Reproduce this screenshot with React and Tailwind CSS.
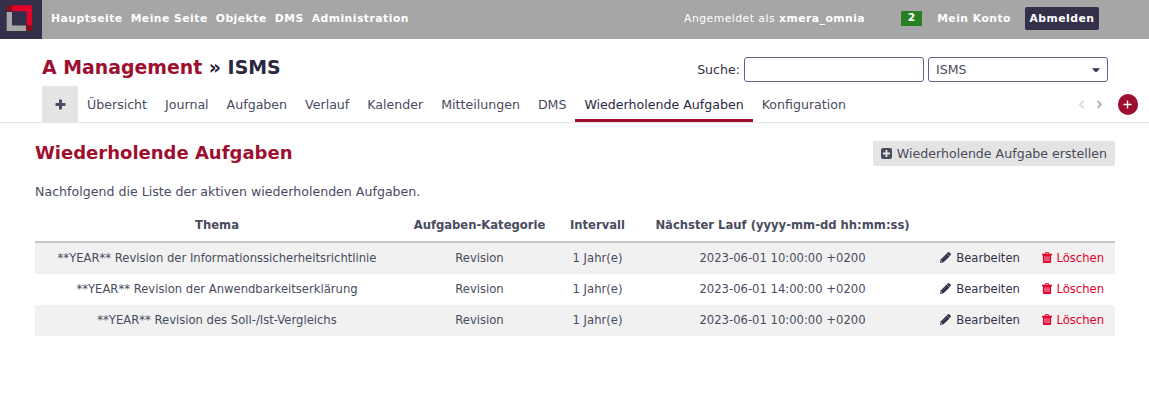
import React from "react";
import { FaAngleLeft, FaAngleRight } from "react-icons/fa";

const MENU = ["Hauptseite", "Meine Seite", "Objekte", "DMS", "Administration"];

const TABS = [
  "Übersicht",
  "Journal",
  "Aufgaben",
  "Verlauf",
  "Kalender",
  "Mitteilungen",
  "DMS",
  "Wiederholende Aufgaben",
  "Konfiguration",
];

const ROWS = [
  { topic: "**YEAR** Revision der Informationssicherheitsrichtlinie", next: "2023-06-01 10:00:00 +0200" },
  { topic: "**YEAR** Revision der Anwendbarkeitserklärung", next: "2023-06-01 14:00:00 +0200" },
  { topic: "**YEAR** Revision des Soll-/Ist-Vergleichs", next: "2023-06-01 10:00:00 +0200" },
];

function Logo() {
  return (
    <div className="flex h-[39px] w-[42px] shrink-0 items-center justify-center bg-[#35304a]">
      <svg width="42" height="39" viewBox="0 0 42 39">
        <path d="M6.7 12h5.3v13.5h14v5.5H6.7z" fill="#a7a7a7" />
        <path d="M12.3 5.3h19.7v19.9h-5.3V11.2H12.3z" fill="#e4002b" />
        <rect x="6.8" y="5.5" width="5.2" height="5.8" fill="#8c0d18" />
        <rect x="26.4" y="25.3" width="5.6" height="5.5" fill="#8c0d18" />
      </svg>
    </div>
  );
}

function PlusIcon() {
  return (
    <svg width="11" height="11" viewBox="0 0 11 11" fill="currentColor">
      <path d="M4.5.5h2q.5 0 .5.5v3h3q.5 0 .5.5v1.900q0 .6-.5.6H7v3q0 .5-.5.5h-2Q4 10.500 4 10V7H1Q.5 7 .5 6.400V4.500Q.5 4 1 4h3V1q0-.5.5-.5z" />
    </svg>
  );
}

function PlusSquareIcon() {
  return (
    <svg width="11" height="11" viewBox="0 0 11 11" className="mr-[5px]">
      <rect width="11" height="11" rx="2" fill="currentColor" />
      <path d="M5.500 2v7M2 5.500h7" stroke="#e4e4e4" strokeWidth="1.800" />
    </svg>
  );
}

function PencilIcon() {
  return (
    <svg width="11" height="11" viewBox="0 0 11 11" fill="currentColor" className="mr-[5px]">
      <path d="M0 11l.7-3.500L6.700 1.600l2.800 2.800-6 5.900z" />
      <path d="M6.900 1.400L8 .3q.6-.5 1.200 0l1.500 1.500q.5.6 0 1.200l-1.100 1.100z" />
      <path d="M2.800 7.400l3.700-3.700" stroke="#ffffff" strokeWidth="0.400" opacity="0.500" />
      <path d="M1.100 8.600l1.200 1.200-.9.300-.6-.6z" fill="#ffffff" opacity="0.700" />
    </svg>
  );
}

function TrashIcon() {
  return (
    <svg width="10" height="11" viewBox="0 0 10 11" className="mr-[4px]">
      <path d="M3 2l.5-1.400h3L7 2" fill="none" stroke="currentColor" strokeWidth="1" />
      <path d="M0 1.800h10v1.400H9.100V9.700q0 1.300-1.200 1.300H2.100Q.9 11 .9 9.700V3.200H0z" fill="currentColor" />
      <path d="M3 4.200v5M5 4.200v5M7 4.200v5" stroke="#ffffff" strokeWidth="0.800" opacity="0.800" />
    </svg>
  );
}

function TopBar() {
  return (
    <header className="flex h-[39px] items-center bg-[#a6a6a6] text-[10.8px] leading-[13px] tracking-[0.48px] text-white">
      <Logo />
      <nav className="ml-[9px] flex gap-[8px] pb-[3px] font-bold">
        {MENU.map((m) => (
          <a key={m}>{m}</a>
        ))}
      </nav>
      <div className="ml-auto flex items-center pr-[50px] pb-[3px]">
        <span className="mr-[36px]">
          Angemeldet als <b>xmera_omnia</b>
        </span>
        <span className="mr-[15px] h-[15px] w-[21px] bg-[#288023] text-center font-bold">2</span>
        <a className="mr-[14px] font-bold">Mein Konto</a>
        <a className="flex h-[23px] w-[74px] items-center justify-center rounded-[2px] bg-[#35304a] font-bold">Abmelden</a>
      </div>
    </header>
  );
}

function ProjectHeader() {
  return (
    <div className="flex h-[47px] items-start pr-[41px] pl-[42px]">
      <h1 className="mt-[16px] text-[18.9px] leading-[24px] font-bold text-[#2b2740]">
        <span className="text-[#9e0f2f]">A Management</span> » ISMS
      </h1>
      <div className="mt-[18px] ml-auto flex items-center">
        <label className="mr-[4px] text-[#35304a]">Suche:</label>
        <div className="h-[25px] w-[180px] rounded-[3px] border border-[#67608f] bg-white" />
        <div className="ml-[4px] flex h-[25px] w-[180px] items-center justify-between rounded-[3px] border border-[#67608f] bg-white pr-[7px] pl-[7px]">
          <span>ISMS</span>
          <svg width="8" height="5" viewBox="0 0 8 5" className="mt-[2px]">
            <path d="M0 .3h8L4.600 4q-.6.5-1.200 0z" fill="#35304a" />
          </svg>
        </div>
      </div>
    </div>
  );
}

function Tabs() {
  return (
    <div className="flex h-[37px] border-b border-[#e4e4e4] pl-[42px]">
      <div className="flex h-[36px] w-[36px] items-center justify-center bg-[#e4e4e4]">
        <PlusIcon />
      </div>
      {TABS.map((t) => (
        <a
          key={t}
          className={
            t === "Wiederholende Aufgaben"
              ? "flex h-[36px] items-center border-b-[3px] border-[#9e0f2f] px-[9px] pt-[4px] whitespace-nowrap text-[#2b2740]"
              : "flex h-[36px] items-center px-[9px] pt-[1px] whitespace-nowrap"
          }
        >
          {t}
        </a>
      ))}
      <div className="ml-auto flex items-center pr-[11px]">
        <FaAngleLeft size={13} className="text-[#dedede]" />
        <FaAngleRight size={13} className="ml-[5px] text-[#b8b8b8]" />
        <span className="ml-[12px] flex h-[21px] w-[20px] items-center justify-center rounded-full bg-[#9e0f2f] pr-px text-white">
          <svg width="9" height="9" viewBox="0 0 9 9" stroke="currentColor" strokeWidth="1.400">
            <path d="M4.500 .5v8M.5 4.500h8" />
          </svg>
        </span>
      </div>
    </div>
  );
}

const COLS = "grid grid-cols-[364px_161px_75px_295px_185px] items-center text-center";

function TaskTable() {
  return (
    <div className="mt-[8px] text-[11.6px]">
      <div className={COLS + " h-[34px] border-b-2 border-[#c8c8c8] font-bold"}>
        <span>Thema</span>
        <span>Aufgaben-Kategorie</span>
        <span>Intervall</span>
        <span>Nächster Lauf (yyyy-mm-dd hh:mm:ss)</span>
        <span />
      </div>
      {ROWS.map((r) => (
        <div key={r.topic} className={COLS + " h-[31px] pb-[2px] odd:bg-white even:bg-[#f1f1f1]"}>
          <span>{r.topic}</span>
          <span>Revision</span>
          <span>1 Jahr(e)</span>
          <span>{r.next}</span>
          <span className="flex items-center justify-end pr-[11px]">
            <a className="flex items-center text-[#35304a]">
              <PencilIcon />
              Bearbeiten
            </a>
            <a className="ml-[22.500px] flex items-center text-[#e4002b]">
              <TrashIcon />
              Löschen
            </a>
          </span>
        </div>
      ))}
    </div>
  );
}

export default function App() {
  return (
    <div className="h-[406px] overflow-hidden bg-white font-['DejaVu_Sans',sans-serif] text-[12.6px] leading-[18px] text-[#484c5e]">
      <TopBar />
      <ProjectHeader />
      <Tabs />
      <main className="pr-[34px] pl-[35px]">
        <div className="flex items-start justify-between pt-[18px]">
          <h2 className="text-[18px] leading-[24px] font-bold text-[#9e0f2f]">Wiederholende Aufgaben</h2>
          <a className="flex h-[25px] items-center rounded-[2px] bg-[#e4e4e4] px-[8px]">
            <PlusSquareIcon />
            Wiederholende Aufgabe erstellen
          </a>
        </div>
        <p className="mt-[17px]">Nachfolgend die Liste der aktiven wiederholenden Aufgaben.</p>
        <TaskTable />
      </main>
    </div>
  );
}
